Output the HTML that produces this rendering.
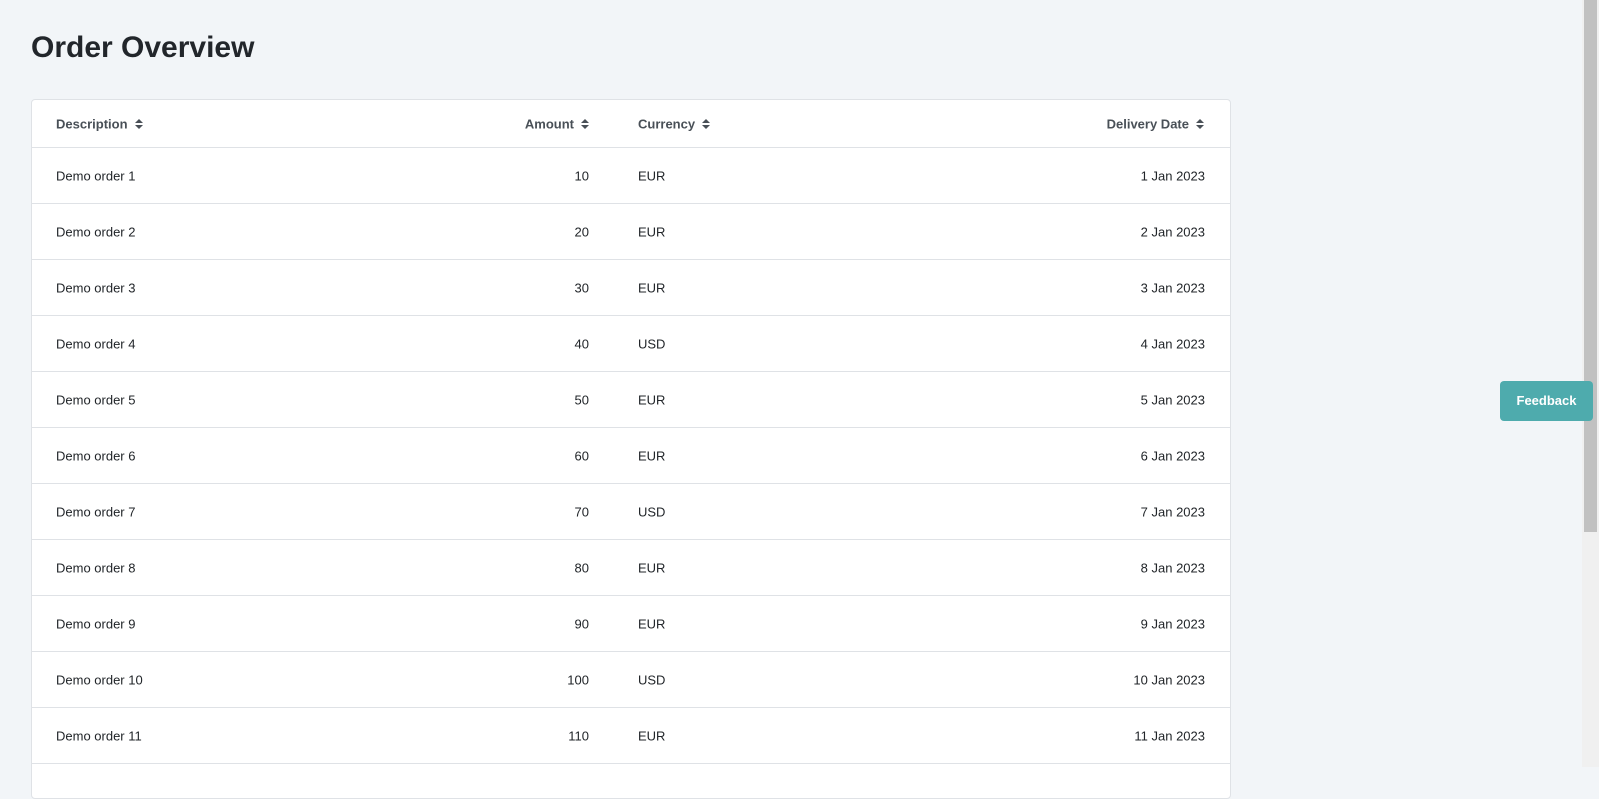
<!DOCTYPE html>
<html><head><meta charset="utf-8"><style>
*{box-sizing:border-box;margin:0;padding:0}
html,body{width:1599px;height:767px;overflow:hidden;background:#f2f5f8;font-family:"Liberation Sans",Arial,sans-serif;color:#212529}
h1{position:absolute;left:31px;top:31px;font-size:30px;font-weight:700;color:#22262b}
.tbl{position:absolute;left:31px;top:99px;width:1200px;height:700px;background:#fff;border:1px solid #dfe2e6;border-radius:4px}
.row{position:absolute;left:0;width:1198px;border-bottom:1px solid #dfe2e6;font-size:13px}
.hd{top:0;height:48px;font-weight:600;color:#495057}
.c{position:absolute;top:50%;transform:translateY(-50%);white-space:nowrap}
.d{left:24px}.a{right:641px;text-align:right}.cu{left:606px}.dt{right:25px;text-align:right}
.ic{display:inline-block;width:8px;height:11px;margin-left:7px;vertical-align:-1px}
.sb{position:absolute;left:1582px;top:0;width:17px;height:767px;background:#f0f0f0}
.th{position:absolute;left:1584px;top:0;width:13px;height:532px;background:#c1c1c1}
.fb{position:absolute;z-index:5;left:1500px;top:381px;width:93px;height:40px;background:#4eabad;border-radius:4px;color:#fff;font-weight:700;font-size:13px;line-height:40px;text-align:center}
</style></head><body>
<h1>Order Overview</h1>
<div class="tbl">
<div class="row hd">
<span class="c d">Description<svg class="ic" viewBox="0 0 8 11"><path d="M0 4.5L4 0.5L8 4.5Z M0 6.5L4 10.5L8 6.5Z" fill="#495057"/></svg></span>
<span class="c a">Amount<svg class="ic" viewBox="0 0 8 11"><path d="M0 4.5L4 0.5L8 4.5Z M0 6.5L4 10.5L8 6.5Z" fill="#495057"/></svg></span>
<span class="c cu">Currency<svg class="ic" viewBox="0 0 8 11"><path d="M0 4.5L4 0.5L8 4.5Z M0 6.5L4 10.5L8 6.5Z" fill="#495057"/></svg></span>
<span class="c dt" style="right:26px">Delivery Date<svg class="ic" viewBox="0 0 8 11"><path d="M0 4.5L4 0.5L8 4.5Z M0 6.5L4 10.5L8 6.5Z" fill="#495057"/></svg></span>
</div>
<div class="row" style="top:48px;height:56px"><span class="c d">Demo order 1</span><span class="c a">10</span><span class="c cu">EUR</span><span class="c dt">1 Jan 2023</span></div>
<div class="row" style="top:104px;height:56px"><span class="c d">Demo order 2</span><span class="c a">20</span><span class="c cu">EUR</span><span class="c dt">2 Jan 2023</span></div>
<div class="row" style="top:160px;height:56px"><span class="c d">Demo order 3</span><span class="c a">30</span><span class="c cu">EUR</span><span class="c dt">3 Jan 2023</span></div>
<div class="row" style="top:216px;height:56px"><span class="c d">Demo order 4</span><span class="c a">40</span><span class="c cu">USD</span><span class="c dt">4 Jan 2023</span></div>
<div class="row" style="top:272px;height:56px"><span class="c d">Demo order 5</span><span class="c a">50</span><span class="c cu">EUR</span><span class="c dt">5 Jan 2023</span></div>
<div class="row" style="top:328px;height:56px"><span class="c d">Demo order 6</span><span class="c a">60</span><span class="c cu">EUR</span><span class="c dt">6 Jan 2023</span></div>
<div class="row" style="top:384px;height:56px"><span class="c d">Demo order 7</span><span class="c a">70</span><span class="c cu">USD</span><span class="c dt">7 Jan 2023</span></div>
<div class="row" style="top:440px;height:56px"><span class="c d">Demo order 8</span><span class="c a">80</span><span class="c cu">EUR</span><span class="c dt">8 Jan 2023</span></div>
<div class="row" style="top:496px;height:56px"><span class="c d">Demo order 9</span><span class="c a">90</span><span class="c cu">EUR</span><span class="c dt">9 Jan 2023</span></div>
<div class="row" style="top:552px;height:56px"><span class="c d">Demo order 10</span><span class="c a">100</span><span class="c cu">USD</span><span class="c dt">10 Jan 2023</span></div>
<div class="row" style="top:608px;height:56px"><span class="c d">Demo order 11</span><span class="c a">110</span><span class="c cu">EUR</span><span class="c dt">11 Jan 2023</span></div>
</div>
<div class="sb"></div><div class="th"></div>
<div class="fb">Feedback</div>
</body></html>
